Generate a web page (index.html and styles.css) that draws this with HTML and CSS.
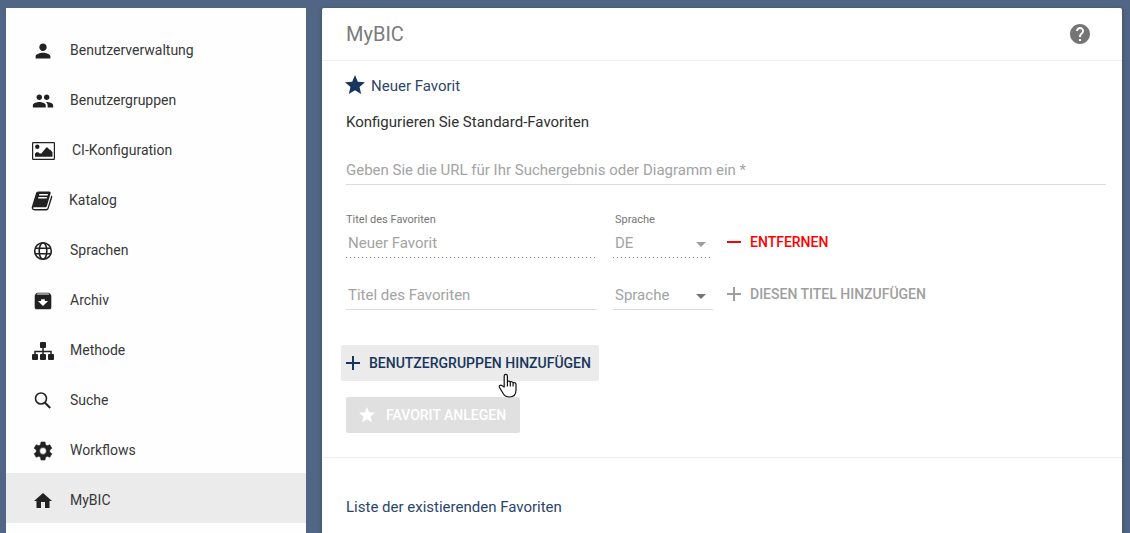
FILE: index.html
```html
<!DOCTYPE html>
<html lang="de">
<head>
<meta charset="utf-8">
<meta name="viewport" content="width=device-width, initial-scale=1">
<title>MyBIC</title>
<link rel="stylesheet" href="styles.css">
</head>
<body>
<div class="app">
  <nav class="sidebar" aria-label="Administration">
    <a class="nav-item" href="#benutzerverwaltung"><svg class="icon" width="24" height="24" viewBox="-1 -1 26 26"><path d="M12 12c2.200 0 4-1.800 4-4s-1.800-4-4-4-4 1.800-4 4 1.800 4 4 4zm0 2c-2.700 0-8 1.300-8 4v2h16v-2c0-2.700-5.300-4-8-4z"/></svg><span>Benutzerverwaltung</span></a>
    <a class="nav-item" href="#benutzergruppen"><svg class="icon" width="24" height="24" viewBox="-1 -1 26 26"><path d="M16 11c1.660 0 2.990-1.340 2.990-3S17.660 5 16 5s-3 1.340-3 3 1.340 3 3 3zm-8 0c1.660 0 2.990-1.340 2.990-3S9.660 5 8 5 5 6.340 5 8s1.340 3 3 3zm0 2c-2.330 0-7 1.170-7 3.500V19h14v-2.500C15 14.170 10.330 13 8 13zm8 0c-.29 0-.62.020-.97.050 1.160.84 1.970 1.970 1.970 3.450V19h6v-2.500c0-2.330-4.670-3.500-7-3.500z"/></svg><span>Benutzergruppen</span></a>
    <a class="nav-item" href="#ci"><svg class="icon" width="26" height="24" viewBox="0 0 26 24"><path fill-rule="evenodd" d="M2.300 3h20.400A1.300 1.300 0 0 1 24 4.300v15.400a1.300 1.300 0 0 1-1.300 1.300H2.300A1.300 1.300 0 0 1 1 19.700V4.300A1.300 1.300 0 0 1 2.300 3zm-.1 1.200v15.600h20.600V4.200z"/><circle cx="6.300" cy="7.800" r="2.200"/><path d="M4 17.800v-3.300l1.500-1.300h1.800l1.400 1.300h1.600l5-6h1.200l1.800 2 1 .3 2.200 2.500v4.500z"/></svg><span>CI-Konfiguration</span></a>
    <a class="nav-item" href="#katalog"><svg class="icon" width="23" height="24" viewBox="0 0 23 24"><path fill-rule="evenodd" d="M7.500 2.500h10.800c1 0 1.600.8 1.300 1.800L16 16.800c-.3 1-1 1.500-2 1.500H3.300c-1 0-1.300.6-1 1.200.2.400.7.500 1.200.5h11.500c.8 0 1.300-.4 1.600-1.200L20.300 6.500c.9.400 1.200 1 .9 2L17.700 19.500c-.4 1.200-1.200 1.900-2.400 1.900H3.800c-2.300 0-3.700-1.800-2.900-3.800L5 4.300c.3-1.100 1.100-1.800 2.500-1.800zm.9 2.500-.4 1.500h8.600l.4-1.500zm-.9 3-.4 1.500h8.600l.4-1.500z"/></svg><span>Katalog</span></a>
    <a class="nav-item" href="#sprachen"><svg class="icon" width="24" height="24" viewBox="0 0 24 24"><g fill="none" stroke="currentColor" stroke-width="1.600"><circle cx="12" cy="12" r="8.300"/><ellipse cx="12" cy="12" rx="3.800" ry="8.300"/><path d="M4 9.200h16M4 14.800h16"/></g></svg><span>Sprachen</span></a>
    <a class="nav-item" href="#archiv"><svg class="icon" width="24" height="24" viewBox="-1 -1 26 26"><path d="M20.540 5.230l-1.390-1.680C18.880 3.210 18.470 3 18 3H6c-.47 0-.88.210-1.160.55L3.460 5.230C3.170 5.570 3 6.020 3 6.500V19c0 1.100.9 2 2 2h14c1.100 0 2-.9 2-2V6.500c0-.48-.17-.93-.46-1.270zM12 17.500L6.500 12H10v-2h4v2h3.500L12 17.500zM5.120 5l.81-1h12l.94 1H5.120z"/></svg><span>Archiv</span></a>
    <a class="nav-item" href="#methode"><svg class="icon" width="24" height="24" viewBox="0 0 24 24"><rect x="9" y="3" width="6" height="6" rx="1"/><rect x="1" y="15" width="6" height="6" rx="1"/><rect x="9" y="15" width="6" height="6" rx="1"/><rect x="17" y="15" width="6" height="6" rx="1"/><path fill="none" stroke="currentColor" stroke-width="1.500" d="M12 8.500V15.500M4 15.500V12.500h16V15.500"/></svg><span>Methode</span></a>
    <a class="nav-item" href="#suche"><svg class="icon" width="24" height="24" viewBox="0 0 24 24"><g fill="none" stroke="currentColor"><circle cx="10" cy="9.500" r="5.500" stroke-width="1.600"/><path stroke-width="2" d="M14 13.700l5.200 5.300"/></g></svg><span>Suche</span></a>
    <a class="nav-item" href="#workflows"><svg class="icon" width="24" height="24" viewBox="0 0 24 24"><path fill-rule="evenodd" stroke="currentColor" stroke-width=".6" stroke-linejoin="round" d="M10 3h4l.5 2.700 1.700 1 2.600-.9 2 3.400L18.700 11v2l2.100 1.800-2 3.400-2.600-.9-1.700 1L14 21h-4l-.5-2.700-1.700-1-2.600.9-2-3.400L5.300 13v-2L3.200 9.200l2-3.400 2.600.9 1.700-1zM12 8.600a3.400 3.400 0 1 0 0 6.800 3.400 3.400 0 0 0 0-6.800z"/></svg><span>Workflows</span></a>
    <a class="nav-item nav-item-active" href="#mybic" aria-current="page"><svg class="icon" width="24" height="24" viewBox="0 0 24 24"><path d="M10 19v-6h4v6h4.500v-7H21l-9-8-9 8h2.500v7z"/></svg><span>MyBIC</span></a>
  </nav>

  <main class="panel">
    <header class="panel-header">
      <h1 class="panel-title">MyBIC</h1>
      <button class="help" type="button" aria-label="Hilfe"><svg class="icon" width="24" height="24" viewBox="0 0 24 24"><path d="M12 2C6.480 2 2 6.480 2 12s4.480 10 10 10 10-4.480 10-10S17.520 2 12 2zm1 17h-2v-2h2v2zm2.070-7.750l-.9.920C13.450 12.900 13 13.500 13 15h-2v-.5c0-1.100.45-2.100 1.170-2.830l1.240-1.260c.37-.36.59-.86.59-1.410 0-1.100-.9-2-2-2s-2 .9-2 2H8c0-2.210 1.790-4 4-4s4 1.790 4 4c0 .88-.36 1.680-.93 2.250z"/></svg></button>
    </header>

    <form class="favorite-form">
      <h2 class="section-title"><svg class="icon" width="20" height="20" viewBox="3 3 20 20"><path d="M12 17.270L18.180 21l-1.640-7.030L22 9.240l-7.190-.61L12 2 9.190 8.630 2 9.240l5.460 4.730L5.820 21z"/></svg><span>Neuer Favorit</span></h2>
      <p class="intro">Konfigurieren Sie Standard-Favoriten</p>
      <input class="field url-field" type="url" aria-label="URL" placeholder="Geben Sie die URL für Ihr Suchergebnis oder Diagramm ein *">

      <div class="title-row">
        <div class="labelled">
          <label class="label" for="title-de">Titel des Favoriten</label>
          <input class="field field-inset" id="title-de" type="text" value="Neuer Favorit" disabled>
        </div>
        <div class="labelled">
          <label class="label label-inset" for="lang-de">Sprache</label>
          <div class="select-box select-box-disabled"><select class="field field-inset" id="lang-de" disabled><option>DE</option></select></div>
        </div>
        <button class="text-button remove" type="button"><svg class="icon" width="16" height="16" viewBox="0 0 16 16"><path d="M1 7h14v2H1z"/></svg><span>ENTFERNEN</span></button>
      </div>

      <div class="title-row title-row-new">
        <input class="field field-inset" type="text" aria-label="Titel des Favoriten" placeholder="Titel des Favoriten">
        <div class="select-box"><select class="field field-inset" aria-label="Sprache"><option>Sprache</option></select></div>
        <button class="text-button add" type="button" disabled><svg class="icon" width="16" height="16" viewBox="0 0 16 16"><path d="M1 7h6V1h2v6h6v2H9v6H7V9H1z"/></svg><span>DIESEN TITEL HINZUFÜGEN</span></button>
      </div>

      <div class="actions">
        <button class="text-button add-groups" type="button"><svg class="icon" width="16" height="16" viewBox="0 0 16 16"><path d="M1 7h6V1h2v6h6v2H9v6H7V9H1z"/></svg><span>BENUTZERGRUPPEN HINZUFÜGEN</span><svg class="pointer" width="20" height="26" viewBox="0 0 20 26" aria-hidden="true"><path fill="#fff" stroke="#111" stroke-width="1.200" stroke-linejoin="round" stroke-linecap="round" d="M6.200 14V3c0-2.200 3.200-2.200 3.200 0v5.500c.7-.8 2.500-.6 2.900.6.800-.7 2.400-.4 2.800.8.900-.6 2.900-.2 2.900 1.600V17c0 4.500-2.500 7-6.500 7-3 0-4.800-1-6-3l-4-6.500c-.8-1.600.8-3 2.300-2zM9.400 8.500V13M12.300 9.100V13M15.100 10v3"/></svg></button>
        <button class="text-button submit" type="submit" disabled><svg class="icon" width="16" height="16" viewBox="2 2 20 20"><path d="M12 17.270L18.180 21l-1.640-7.030L22 9.240l-7.190-.61L12 2 9.190 8.630 2 9.240l5.460 4.730L5.820 21z"/></svg><span>FAVORIT ANLEGEN</span></button>
      </div>
    </form>

    <section class="existing">
      <h2 class="section-title">Liste der existierenden Favoriten</h2>
    </section>
  </main>
</div>
</body>
</html>
```
FILE: styles.css
```css
* {
  box-sizing: border-box;
}

body {
  margin: 0;
  background: #516684;
  color: #303030;
  font: 15px/22px Roboto, sans-serif;
}

button,
input,
select {
  margin: 0;
  padding: 0;
  border: 0;
  background: none;
  font: inherit;
}

.icon {
  display: block;
  flex: none;
  overflow: visible;
  fill: currentColor;
}

.app {
  display: flex;
  gap: 16px;
  min-height: 100vh;
  padding: 8px 8px 0 6px;
}

.sidebar {
  flex: 0 0 300px;
  padding-top: 15px;
  background: #fefefe;
}

.nav-item {
  display: flex;
  align-items: center;
  gap: 15px;
  height: 50px;
  padding: 5px 25px 0;
  color: #212121;
  font-size: 14px;
  line-height: 20px;
  text-decoration: none;
}

.nav-item span {
  padding-bottom: 2px;
  color: #383838;
}

.nav-item-active {
  background: #ebebeb;
}

.panel {
  flex: 1;
  min-width: 0;
  border-radius: 2px 2px 0 0;
  background: #fff;
  box-shadow: 0 1px 4px rgba(0, 0, 0, 0.3);
}

.panel-header {
  display: flex;
  align-items: center;
  justify-content: space-between;
  padding: 14px 30px 14px 24px;
  border-bottom: 1px solid #efefef;
  color: #7b7b7b;
}

.panel-title {
  margin: 0;
  font-size: 20px;
  font-weight: 400;
  line-height: 24px;
}

.help {
  color: #757575;
}

.favorite-form {
  padding: 14px 16px 24px 24px;
  border-bottom: 1px solid #efefef;
}

.section-title {
  display: flex;
  align-items: center;
  gap: 5px;
  margin: 0;
  color: #2a466b;
  font-size: 15px;
  font-weight: 400;
  line-height: 22px;
}

.section-title .icon {
  color: #17365d;
}

.intro {
  margin: 14px 0 25px;
}

.field {
  display: block;
  width: 100%;
  height: 27px;
  padding: 0 0 2px;
  border-bottom: 1px solid #dcdcdc;
  border-radius: 0;
  outline: 0;
  color: #a3a3a3;
  appearance: none;
}

.field-inset {
  padding-left: 2px;
}

.field::placeholder {
  color: #a3a3a3;
  opacity: 1;
}

.field:disabled {
  border-bottom-color: transparent;
  background: linear-gradient(to right, #8f8f8f 1px, transparent 1px) 0 100% / 4px 1px repeat-x border-box;
  color: #a3a3a3;
  opacity: 1;
}

.title-row {
  display: grid;
  grid-template-columns: 251px 100px 1fr;
  column-gap: 16px;
  align-items: end;
  margin-top: 28px;
}

.title-row > .text-button {
  justify-self: start;
  margin-left: -3px;
}

.title-row-new {
  margin-top: 20px;
}

.labelled {
  display: grid;
  gap: 4px;
}

.label {
  color: #757575;
  font-size: 11px;
  line-height: 14px;
}

.label-inset {
  padding-left: 2px;
}

.select-box {
  display: grid;
  align-items: center;
  color: #757575;
}

.select-box-disabled {
  color: #9e9e9e;
}

.select-box > * {
  grid-area: 1 / 1;
}

.select-box::after {
  content: "";
  grid-area: 1 / 1;
  justify-self: end;
  margin-right: 7px;
  border: 5px solid transparent;
  border-top-color: currentColor;
  border-bottom: 0;
  pointer-events: none;
}

.text-button {
  display: flex;
  align-items: center;
  gap: 8px;
  height: 32px;
  font-size: 14px;
  font-weight: 500;
}

.remove {
  color: #f00;
}

.add {
  color: #9e9e9e;
}

.actions {
  display: flex;
  flex-direction: column;
  align-items: flex-start;
  gap: 16px;
  margin-top: 35px;
}

.add-groups {
  position: relative;
  height: 36px;
  margin-left: -5px;
  padding: 0 8px 0 4px;
  border-radius: 2px;
  background: #ebebeb;
  color: #17365d;
}

.pointer {
  position: absolute;
  top: 28px;
  left: 157px;
}

.submit {
  gap: 11px;
  height: 36px;
  padding: 0 14px 0 13px;
  border-radius: 2px;
  background: #e0e0e0;
  color: #fff;
}

.existing {
  padding: 38px 24px 16px;
}
```
